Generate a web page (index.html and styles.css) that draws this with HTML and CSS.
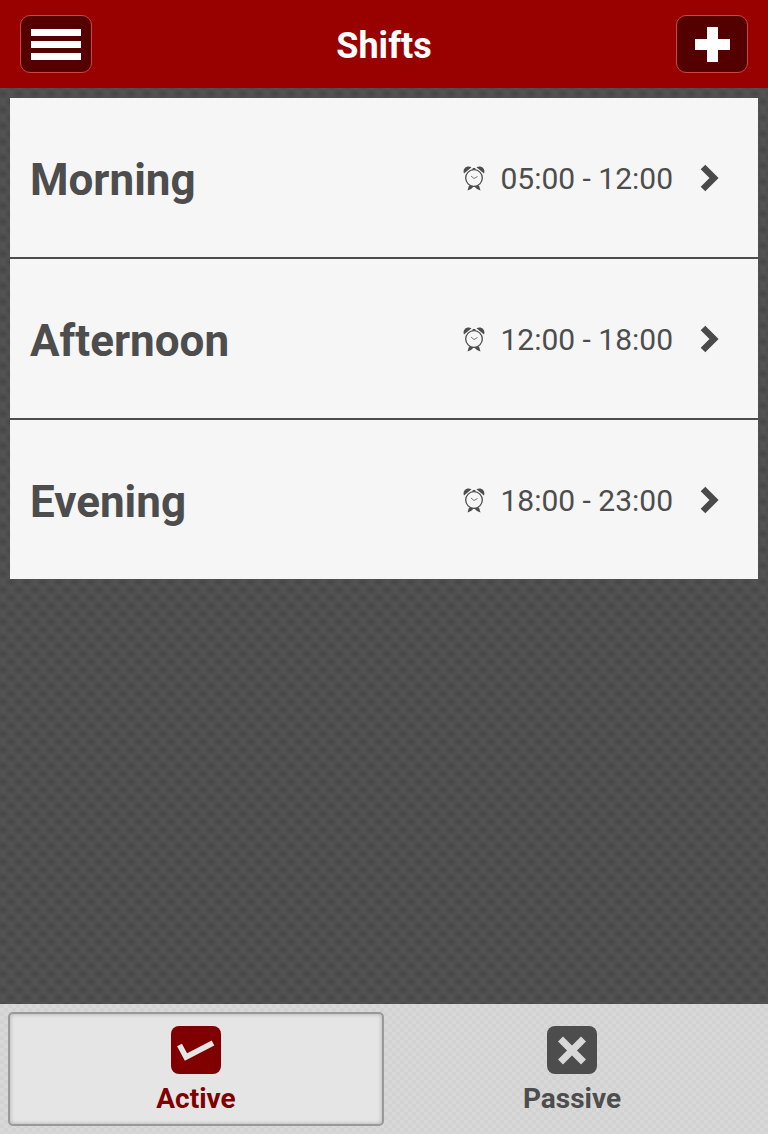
FILE: index.html
```
<!DOCTYPE html>
<html lang="en">
<head>
  <meta charset="UTF-8">
  <meta name="viewport" content="width=device-width, initial-scale=1.0">
  <title>Shifts</title>
  <link rel="stylesheet" href="styles.css">
</head>
<body>
  <svg class="sprite" aria-hidden="true">
    <symbol id="clock" viewBox="0 0 22 26">
      <circle cx="11" cy="13" r="8.300" fill="none" stroke="#4d4d4d" stroke-width="1.300"/>
      <path d="M1 8.500C-.8 4 3.500-.5 8.500 2.200ZM21 8.500C22.800 4 18.500-.5 13.500 2.200Z" fill="#4d4d4d"/>
      <path d="M9 4.500L10 3H12L13 4.500ZM6 20.500L11 21.300L8 24L4.500 25.500ZM16 20.500L11 21.300L14 24L17.500 25.500Z" fill="#4d4d4d"/>
      <path d="M8 11L11 13.500L14.500 11.500" fill="none" stroke="#777" stroke-width="1"/>
    </symbol>
    <symbol id="arrow" viewBox="0 0 20 28">
      <path d="M3 3L14 14L3 25" fill="none" stroke="#4a4a4a" stroke-width="6.500"/>
    </symbol>
  </svg>

  <header class="header">
    <button class="header-btn" type="button" aria-label="Menu">
      <svg width="50" height="32" viewBox="0 0 50 32"><path d="M0 1H50V8H0ZM0 13H50V20H0ZM0 25H50V32H0Z" fill="#fff"/></svg>
    </button>
    <h1>Shifts</h1>
    <button class="header-btn" type="button" aria-label="Add shift">
      <svg width="36" height="36" viewBox="0 0 36 36"><path d="M13 1H24V13H36V24H24V36H13V24H1V13H13Z" fill="#fff"/></svg>
    </button>
  </header>

  <main class="content">
    <ul class="shifts">
      <li>
        <a class="shift" href="#morning">
          <span class="name">Morning</span>
          <svg class="clock"><use href="#clock"/></svg>
          <span class="time">05:00 - 12:00</span>
          <svg class="arrow"><use href="#arrow"/></svg>
        </a>
      </li>
      <li>
        <a class="shift" href="#afternoon">
          <span class="name">Afternoon</span>
          <svg class="clock"><use href="#clock"/></svg>
          <span class="time">12:00 - 18:00</span>
          <svg class="arrow"><use href="#arrow"/></svg>
        </a>
      </li>
      <li>
        <a class="shift" href="#evening">
          <span class="name">Evening</span>
          <svg class="clock"><use href="#clock"/></svg>
          <span class="time">18:00 - 23:00</span>
          <svg class="arrow"><use href="#arrow"/></svg>
        </a>
      </li>
    </ul>
  </main>

  <nav class="tabs">
    <a class="tab active" href="#active">
      <svg width="50" height="48" viewBox="0 0 50 48">
        <rect width="50" height="48" rx="8" fill="#800000"/>
        <path d="M8.500 19L15 31L42 17" fill="none" stroke="#e6e6e6" stroke-width="5.500"/>
      </svg>
      Active
    </a>
    <a class="tab" href="#passive">
      <svg width="50" height="48" viewBox="0 0 50 48">
        <rect width="50" height="48" rx="8" fill="#4d4d4d"/>
        <path d="M13.500 13L36.500 36M36.500 13L13.500 36" fill="none" stroke="#d8d8d8" stroke-width="7"/>
      </svg>
      Passive
    </a>
  </nav>
</body>
</html>
```

FILE: styles.css
```
* {
  box-sizing: border-box;
}
body {
  margin: 0;
  min-height: 100vh;
  display: flex;
  flex-direction: column;
  font-family: Roboto, sans-serif;
  color: #4d4d4d;
  /* dark dimpled texture */
  background-color: #545454;
  background-image:
    radial-gradient(ellipse 8px 6px, #454545, transparent),
    radial-gradient(ellipse 8px 6px, #454545, transparent);
  background-position: 11px 6px, 3px 14px;
  background-size: 16px 16px;
}
.sprite {
  display: none;
}
.header {
  display: flex;
  align-items: center;
  justify-content: space-between;
  height: 88px;
  padding: 0 20px;
  background: #990000;
}
.header h1 {
  margin: 0;
  padding-top: 3px;
  font-size: 36px;
  line-height: 44px;
  color: #fff;
}
.header-btn {
  display: flex;
  align-items: center;
  justify-content: center;
  width: 72px;
  height: 58px;
  padding: 0;
  border: 1px solid #c44;
  border-radius: 10px;
  background: #550000;
  cursor: pointer;
}
.content {
  flex: 1;
  padding: 10px;
}
.shifts {
  display: flex;
  flex-direction: column;
  gap: 2px;
  margin: 0;
  padding: 0;
  list-style: none;
  background: #4d4d4d;
}
.shift {
  display: flex;
  align-items: center;
  min-height: 159px;
  padding: 0 38px 0 20px;
  background: #f6f6f6;
  color: #4d4d4d;
  text-decoration: none;
}
.name {
  flex: 1;
  padding-top: 4px;
  font-size: 44px;
  font-weight: bold;
}
.clock {
  width: 22px;
  height: 26px;
  margin-right: 15px;
}
.time {
  padding-top: 2px;
  font-size: 30px;
}
.arrow {
  width: 20px;
  height: 28px;
  margin-left: 27px;
}
.tabs {
  display: flex;
  padding: 8px;
  background: repeating-conic-gradient(#d8d8d8 0 25%, #d2d2d2 0 50%) 0 0 / 8px 8px;
}
.tab {
  flex: 1;
  display: flex;
  flex-direction: column;
  align-items: center;
  gap: 9px;
  padding: 12px 0 9px;
  border: 2px solid transparent;
  border-radius: 5px;
  font-size: 28px;
  line-height: 32px;
  font-weight: bold;
  color: #4d4d4d;
  text-decoration: none;
}
.tab.active {
  border-color: #999;
  background: #e5e5e5;
  box-shadow: inset 0 0 4px #aaa;
  color: #800000;
}
```
